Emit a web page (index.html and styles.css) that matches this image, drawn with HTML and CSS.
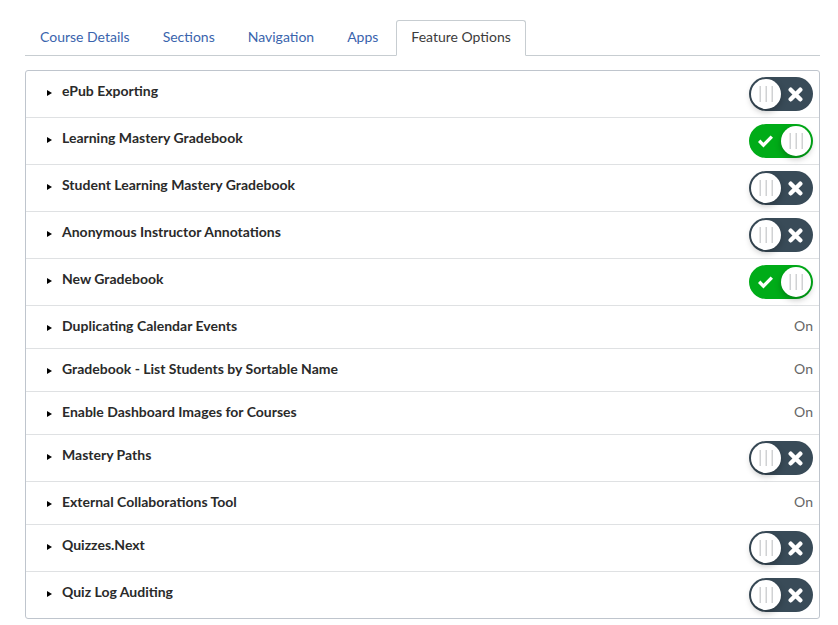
FILE: index.html
```html
<!DOCTYPE html>
<html lang="en">
<head>
<meta charset="utf-8">
<title>Feature Options</title>
<link rel="stylesheet" href="styles.css">
</head>
<body>
<svg class="sprite" aria-hidden="true">
  <symbol id="x" viewBox="0 0 15 15"><path d="M2.7 2.7 12.3 12.3M12.3 2.7 2.7 12.3" stroke="#fff" stroke-width="4.4" stroke-linecap="round"/></symbol>
  <symbol id="check" viewBox="0 0 14 14"><path d="M0 7.4 2.2 5.2 5.1 8.1 11.8 1.4 14 3.6 5.1 12.5Z" fill="#fff"/></symbol>
  <symbol id="arrow" viewBox="0 0 5 6"><path d="M0 0 5 3 0 6Z" fill="#000"/></symbol>
</svg>
<nav class="tabs">
  <a class="tab" href="#details">Course Details</a>
  <a class="tab" href="#sections">Sections</a>
  <a class="tab" href="#navigation">Navigation</a>
  <a class="tab" href="#apps">Apps</a>
  <a class="tab active" href="#features" aria-current="page">Feature Options</a>
</nav>
<ul class="features" id="features">
  <li class="feature"><button class="title" id="f1" type="button" aria-expanded="false"><svg class="arrow"><use href="#arrow"/></svg>ePub Exporting</button><label class="toggle"><input type="checkbox" aria-labelledby="f1"><span class="knob"></span><svg class="mark"><use href="#x"/></svg></label></li>
  <li class="feature"><button class="title" id="f2" type="button" aria-expanded="false"><svg class="arrow"><use href="#arrow"/></svg>Learning Mastery Gradebook</button><label class="toggle on"><input type="checkbox" checked aria-labelledby="f2"><svg class="mark"><use href="#check"/></svg><span class="knob"></span></label></li>
  <li class="feature"><button class="title" id="f3" type="button" aria-expanded="false"><svg class="arrow"><use href="#arrow"/></svg>Student Learning Mastery Gradebook</button><label class="toggle"><input type="checkbox" aria-labelledby="f3"><span class="knob"></span><svg class="mark"><use href="#x"/></svg></label></li>
  <li class="feature"><button class="title" id="f4" type="button" aria-expanded="false"><svg class="arrow"><use href="#arrow"/></svg>Anonymous Instructor Annotations</button><label class="toggle"><input type="checkbox" aria-labelledby="f4"><span class="knob"></span><svg class="mark"><use href="#x"/></svg></label></li>
  <li class="feature"><button class="title" id="f5" type="button" aria-expanded="false"><svg class="arrow"><use href="#arrow"/></svg>New Gradebook</button><label class="toggle on"><input type="checkbox" checked aria-labelledby="f5"><svg class="mark"><use href="#check"/></svg><span class="knob"></span></label></li>
  <li class="feature"><button class="title" type="button" aria-expanded="false"><svg class="arrow"><use href="#arrow"/></svg>Duplicating Calendar Events</button><span class="state">On</span></li>
  <li class="feature"><button class="title" type="button" aria-expanded="false"><svg class="arrow"><use href="#arrow"/></svg>Gradebook - List Students by Sortable Name</button><span class="state">On</span></li>
  <li class="feature"><button class="title" type="button" aria-expanded="false"><svg class="arrow"><use href="#arrow"/></svg>Enable Dashboard Images for Courses</button><span class="state">On</span></li>
  <li class="feature"><button class="title" id="f9" type="button" aria-expanded="false"><svg class="arrow"><use href="#arrow"/></svg>Mastery Paths</button><label class="toggle"><input type="checkbox" aria-labelledby="f9"><span class="knob"></span><svg class="mark"><use href="#x"/></svg></label></li>
  <li class="feature"><button class="title" type="button" aria-expanded="false"><svg class="arrow"><use href="#arrow"/></svg>External Collaborations Tool</button><span class="state">On</span></li>
  <li class="feature"><button class="title" id="f11" type="button" aria-expanded="false"><svg class="arrow"><use href="#arrow"/></svg>Quizzes.Next</button><label class="toggle"><input type="checkbox" aria-labelledby="f11"><span class="knob"></span><svg class="mark"><use href="#x"/></svg></label></li>
  <li class="feature"><button class="title" id="f12" type="button" aria-expanded="false"><svg class="arrow"><use href="#arrow"/></svg>Quiz Log Auditing</button><label class="toggle"><input type="checkbox" aria-labelledby="f12"><span class="knob"></span><svg class="mark"><use href="#x"/></svg></label></li>
</ul>
</body>
</html>
```
FILE: styles.css
```css
* { box-sizing: border-box; }
body {
  margin: 0;
  padding: 20px 18px 6px 25px;
  background: #fff;
  color: #2d3b45;
  font: 14px/20px Lato, "Liberation Sans", sans-serif;
}
.sprite { position: absolute; width: 0; height: 0; }
.tabs {
  display: flex;
  gap: 3px;
  margin-bottom: 14px;
  border-bottom: 1px solid #c7cdd1;
}
.tab {
  padding: 6px 14px 8px;
  margin-bottom: -1px;
  border: 1px solid transparent;
  border-radius: 3px 3px 0 0;
  color: #3a64ad;
  text-decoration: none;
}
.tab.active {
  border-color: #c7cdd1;
  border-bottom-color: #fff;
  background: #fff;
  color: #3c3c3c;
}
.features {
  margin: 0;
  padding: 0;
  list-style: none;
  border: 1px solid #bfc5cd;
  border-radius: 3px;
}
.feature {
  display: flex;
  align-items: flex-start;
  justify-content: space-between;
  padding: 0 6px 0 21px;
}
.feature + .feature { border-top: 1px solid #dfe1e3; }
.title {
  display: flex;
  align-items: center;
  gap: 10px;
  padding: 10px 0 12px;
  border: 0;
  background: none;
  color: #2a2a2a;
  font: inherit;
  font-weight: 700;
  text-align: left;
}
.arrow { width: 5px; height: 6px; margin-top: 3px; }
.state { padding: 10px 0 12px; color: #666; }
.toggle {
  display: flex;
  align-items: center;
  width: 64px;
  height: 34px;
  margin: 6px 0;
  padding: 2px;
  gap: 7px;
  border-radius: 17px;
  background: #394b58;
}
.toggle.on { background: #00ac18; justify-content: flex-end; gap: 8px; }
.toggle input {
  position: absolute;
  width: 1px;
  height: 1px;
  margin: 0;
  opacity: 0;
}
.knob {
  display: flex;
  align-items: center;
  justify-content: center;
  width: 30px;
  height: 30px;
  border-radius: 50%;
  background: #fff;
  box-shadow: 0 3px 6px rgba(0, 0, 0, 0.25);
}
.knob::before {
  content: "";
  width: 14px;
  height: 16px;
  background: repeating-linear-gradient(90deg, #e8e8e8 0 1px, #d0d2d4 1px 2px, #fff 2px 6px);
}
.mark { width: 15px; height: 15px; margin-top: 1px; }
```
